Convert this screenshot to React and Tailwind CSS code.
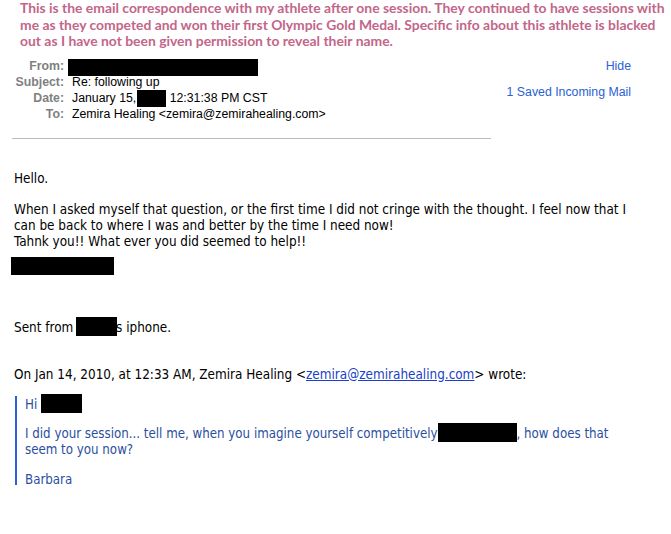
import React from "react";

const Box = ({ className }) => <span className={`inline-block bg-black align-middle ${className}`} />;

export default function App() {
  const rows = [
    { label: "From:", value: <Box className="w-[190px] h-[17px] -ml-[4px]" /> },
    { label: "Subject:", value: "Re: following up" },
    {
      label: "Date:",
      value: (
        <span>
          January 15,<Box className="w-[29px] h-[17px] ml-[1px] -mt-[2px]" />&nbsp;12:31:38 PM CST
        </span>
      ),
    },
    { label: "To:", value: "Zemira Healing <zemira@zemirahealing.com>" },
  ];

  return (
    <div className="w-[671px] h-[534px] bg-white overflow-hidden relative">
      <div className="pl-[20px] text-[13.9px] leading-[16.5px] font-bold text-[#c2668a] font-['Lato',sans-serif] whitespace-nowrap">
        This is the email correspondence with my athlete after one session. They continued to have sessions with
        <br />
        me as they competed and won their first Olympic Gold Medal. Specific info about this athlete is blacked
        <br />
        out as I have not been given permission to reveal their name.
      </div>

      <div className="flex mt-[9px] pr-[40px] font-['Liberation_Sans',sans-serif] text-[12.3px]">
        <div className="flex-1">
          {rows.map((r) => (
            <div key={r.label} className="flex h-[16px] items-center">
              <span className="w-[64px] text-right font-bold text-[#7f7f7f]">{r.label}</span>
              <span className="ml-[8px] text-black whitespace-nowrap">{r.value}</span>
            </div>
          ))}
        </div>
        <div className="flex flex-col items-end text-[#2a62d4] -mt-[2px]">
          <span className="h-[16px]">Hide</span>
          <span className="mt-[10px]">1 Saved Incoming Mail</span>
        </div>
      </div>

      <div className="mx-[12px] mt-[15px] w-[479px] h-px bg-[#bbbbbb]" />

      <div className="px-[14px] pt-[32px] font-['DejaVu_Sans_Condensed','DejaVu_Sans',sans-serif] text-[13.4px] leading-[16px] text-black whitespace-nowrap">
        <p>Hello.</p>
        <p className="mt-[15px]">
          When I asked myself that question, or the first time I did not cringe with the thought. I feel now that I
          <br />
          can be back to where I was and better by the time I need now!
          <br />
          Tahnk you!! What ever you did seemed to help!!
        </p>
        <Box className="block -ml-[3px] mt-[7px] w-[103px] h-[18px]" />
        <p className="mt-[45px]">
          Sent from <Box className="w-[41px] h-[19px] -ml-[1px] -mt-[3px]" />
          <span className="-ml-[1px]">s iphone.</span>
        </p>
        <p className="mt-[31px]">
          On Jan 14, 2010, at 12:33 AM, Zemira Healing &lt;
          <span className="text-[#1a3fc8] underline">zemira@zemirahealing.com</span>&gt; wrote:
        </p>
        <div className="mt-[13px] ml-[1px] border-l-2 border-[#2a62d4] pl-[8px] text-[#2b4fa0] text-[13.2px]">
          <p className="pt-[1px]">
            Hi <Box className="w-[41px] h-[19px] -mt-[3px]" />
          </p>
          <p className="mt-[13px]">
            I did your session... tell me, when you imagine yourself competitively
            <Box className="w-[79px] h-[19px] -mt-[3px]" />, how does that
            <br />
            seem to you now?
          </p>
          <p className="mt-[14px] h-[13px]">Barbara</p>
        </div>
      </div>
    </div>
  );
}
